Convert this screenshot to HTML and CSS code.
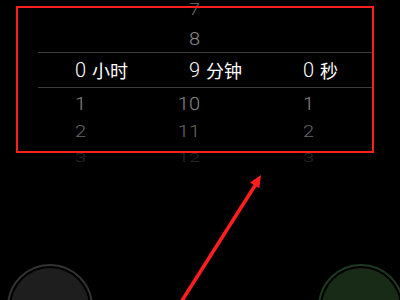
FILE: index.html
```html
<!DOCTYPE html>
<html lang="zh">
<head>
<meta charset="utf-8">
<title>计时器</title>
<link rel="stylesheet" href="styles.css">
</head>
<body>
<div class="screen">
  <div class="picker">
    <div class="row far up">
      <span class="cell"></span>
      <span class="cell"><span class="num">7</span></span>
      <span class="cell"></span>
    </div>
    <div class="row near up">
      <span class="cell"></span>
      <span class="cell"><span class="num">8</span></span>
      <span class="cell"></span>
    </div>
    <div class="row sel">
      <span class="cell"><span class="num">0</span><span class="unit">小时</span></span>
      <span class="cell"><span class="num">9</span><span class="unit">分钟</span></span>
      <span class="cell"><span class="num">0</span><span class="unit">秒</span></span>
    </div>
    <div class="row near down">
      <span class="cell"><span class="num">1</span></span>
      <span class="cell"><span class="num">10</span></span>
      <span class="cell"><span class="num">1</span></span>
    </div>
    <div class="row far down">
      <span class="cell"><span class="num">2</span></span>
      <span class="cell"><span class="num">11</span></span>
      <span class="cell"><span class="num">2</span></span>
    </div>
    <div class="row farthest down">
      <span class="cell"><span class="num">3</span></span>
      <span class="cell"><span class="num">12</span></span>
      <span class="cell"><span class="num">3</span></span>
    </div>
  </div>

  <div class="controls">
    <div class="btn btn-cancel"><span class="face">取消</span></div>
    <div class="btn btn-start"><span class="face">开始</span></div>
  </div>

  <div class="annot-box"></div>
  <svg class="annot-arrow" width="400" height="300" viewBox="0 0 400 300">
    <line x1="176" y1="310" x2="256" y2="184" stroke="#ff1e1e" stroke-width="3.6" stroke-linecap="butt"/>
    <polygon points="261,175 259.3,188.3 250,182.4" fill="#ff1e1e"/>
  </svg>
</div>
</body>
</html>
```

FILE: styles.css
```css
html, body {
  margin: 0;
  padding: 0;
  background: #000;
  overflow: hidden;
}

.screen {
  position: relative;
  width: 400px;
  height: 300px;
  overflow: hidden;
  background: #000;
  font-family: "Roboto", "Noto Sans CJK SC", sans-serif;
}

.picker {
  margin-top: -4px;
  height: 174px;
  display: flex;
  flex-direction: column;
}

.row {
  display: grid;
  grid-template-columns: repeat(3, 114px);
  align-items: center;
  flex: none;
}

.cell {
  display: flex;
  align-items: center;
  white-space: nowrap;
  min-width: 0;
}

.num {
  flex: none;
  width: 86px;
  text-align: right;
  font-size: 20px;
  font-weight: 300;
  line-height: 1;
}

.unit {
  flex: none;
  margin-left: 6px;
  font-family: "Noto Sans CJK SC", sans-serif;
  font-size: 18px;
  line-height: 1;
  white-space: nowrap;
}

.row.far.up { height: 28px; color: #6a6a6a; }
.row.far.up .num { transform: scaleY(0.78); }

.row.near.up { height: 28px; color: #8e8e8e; }
.row.near.up .num { transform: scaleY(0.94); }

.row.sel {
  height: 36px;
  color: #fff;
  background:
    linear-gradient(#3c3c3c, #3c3c3c) 38px 0 / 334px 1px no-repeat,
    linear-gradient(#3c3c3c, #3c3c3c) 38px 100% / 334px 1px no-repeat;
}

.row.near.down { height: 30px; color: #888; }
.row.near.down .num { transform: scaleY(0.96); }

.row.far.down { height: 26px; color: #666; }
.row.far.down .num { transform: scaleY(0.86); }

.row.farthest.down { height: 26px; color: #2a2a2a; }
.row.farthest.down .num { transform: scaleY(0.66); }

.controls {
  margin-top: 94px;
  width: 404px;
  padding-left: 7px;
  box-sizing: border-box;
  display: flex;
  justify-content: space-between;
}

.btn {
  width: 86px;
  height: 86px;
  box-sizing: border-box;
  border-radius: 50%;
  border: 2px solid #333;
  padding: 2px;
  background: #000;
  flex: none;
}

.face {
  display: flex;
  align-items: center;
  justify-content: center;
  width: 100%;
  height: 100%;
  border-radius: 50%;
  font-family: "Noto Sans CJK SC", sans-serif;
  font-size: 17px;
}

.btn-cancel .face {
  background: #1e1e1e;
  color: #fff;
}

.btn-start {
  border-color: #1f3a22;
}

.btn-start .face {
  background: #172b17;
  color: #3fd45a;
}

.annot-box {
  position: absolute;
  left: 16px;
  top: 6px;
  width: 358px;
  height: 147px;
  box-sizing: border-box;
  border: 2px solid #ff1e1e;
}

.annot-arrow {
  position: absolute;
  left: 0;
  top: 0;
}
```
